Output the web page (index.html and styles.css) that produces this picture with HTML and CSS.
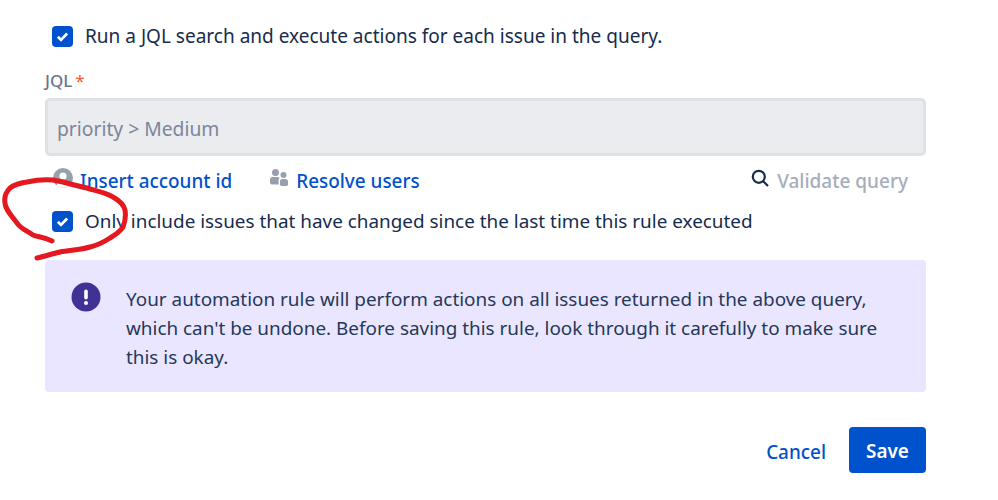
FILE: index.html
```html
<!DOCTYPE html>
<html lang="en">
<head>
    <meta charset="UTF-8">
    <title>JQL rule settings</title>
    <link rel="stylesheet" href="styles.css">
</head>
<body>
    <div class="form">
        <label class="check check-first">
            <span class="box"><svg viewBox="0 0 20 20"><path d="M5.600 10.200l3 3 5.800-6" fill="none" stroke="#fff" stroke-width="2.600"/></svg></span>
            Run a JQL search and execute actions for each issue in the query.
        </label>
        <div class="field-label">JQL<span class="req">*</span></div>
        <div class="jql-input">priority &gt; Medium</div>
        <div class="links">
            <a class="link link-account">
                <svg class="icon" viewBox="0 0 20 20" width="20" height="20"><circle cx="10" cy="10" r="10" fill="#97a0af"/><circle cx="10" cy="8" r="3.600" fill="#fff"/><path d="M3.600 17.500c1-3.600 3.400-5 6.400-5s5.400 1.400 6.400 5a10 10 0 0 1-12.800 0z" fill="#fff"/></svg>
                Insert account id
            </a>
            <a class="link link-users">
                <svg class="icon" viewBox="0 0 20 20" width="20" height="20"><circle cx="6.500" cy="4.500" r="3.500" fill="#97a0af"/><circle cx="14.500" cy="7" r="3" fill="#97a0af"/><path d="M1 11.500c0-1.500 1-2.500 2.500-2.500h5c.8 0 1.500.3 2 .9-.6.700-.9 1.500-.9 2.400v4.200H3c-1.200 0-2-.8-2-2z" fill="#97a0af"/><path d="M11 13c0-1 .8-2 2-2h3.500c1.300 0 2.500 1 2.500 2.200v3c0 1-.8 1.800-1.800 1.800h-4.400c-1 0-1.800-.8-1.800-1.800z" fill="#97a0af"/></svg>
                Resolve users
            </a>
            <span class="validate">
                <svg class="icon" viewBox="0 0 20 20" width="20" height="20"><circle cx="8.800" cy="8.800" r="6" fill="none" stroke="#172b4d" stroke-width="2.200"/><path d="M13.200 13.200l4.800 4.800" stroke="#172b4d" stroke-width="2.200"/></svg>
                Validate query
            </span>
        </div>
        <label class="check check-second">
            <span class="box"><svg viewBox="0 0 20 20"><path d="M5.600 10.200l3 3 5.800-6" fill="none" stroke="#fff" stroke-width="2.600"/></svg></span>
            Only include issues that have changed since the last time this rule executed
        </label>
        <div class="notice">
            <svg class="notice-icon" viewBox="0 0 30 30" width="30" height="30"><circle cx="15" cy="15" r="14.500" fill="#403294"/><rect x="13.200" y="7.500" width="3.600" height="10" rx="1.800" fill="#fff"/><circle cx="15" cy="21" r="2" fill="#fff"/></svg>
            <p>Your automation rule will perform actions on all issues returned in the above query, which can't be undone. Before saving this rule, look through it carefully to make sure this is okay.</p>
        </div>
        <div class="actions">
            <a class="cancel">Cancel</a>
            <button class="save">Save</button>
        </div>
    </div>
    <svg class="scribble" viewBox="0 0 140 90" width="140" height="90"><path d="M52 241C44 237 38 237 33 235C24 229 20 228 17 223C11 215 5 209 5 203C4 197 6 192 10 188C15 184 20 183 27 182C36 180 44 179 53 180C65 182 76 186 87 188C97 191 107 193 113 197C120 201 124 205 125 210C126 216 125 222 123 227C120 232 115 235 110 238C104 242 98 245 90 247C80 250 70 250 60 252C52 254 45 256 37 258" transform="translate(0 -175)" fill="none" stroke="#e5171f" stroke-width="5" stroke-linecap="round" stroke-linejoin="round"/></svg>
</body>
</html>
```
FILE: styles.css
```css
body {
    font-family: "Noto Sans", "Open Sans", sans-serif;
    background-color: #fff;
    color: #172b4d;
    margin: 0;
}

.form {
    width: 881px;
    margin-left: 45px;
    padding-top: 23px;
}

.check {
    display: flex;
    align-items: center;
    gap: 12px;
    padding-left: 7px;
    font-size: 18.9px;
    line-height: 26px;
}

.check-first {
    font-size: 19.03px;
}

.box {
    width: 21px;
    height: 21px;
    background: #0052cc;
    border-radius: 4px;
    flex: none;
    display: block;
}

.box svg {
    display: block;
    width: 100%;
    height: 100%;
}

.field-label {
    margin-top: 21px;
    font-size: 17px;
    line-height: 22px;
    font-weight: 500;
    color: #6b778c;
}

.req {
    color: #ff5630;
    margin-left: 3px;
    font-weight: 400;
}

.jql-input {
    margin-top: 6px;
    height: 50px;
    padding: 2px 9px 0;
    display: flex;
    align-items: center;
    background: #ebecf0;
    border: 3px solid #dfe1e6;
    border-radius: 5px;
    font-size: 19.3px;
    color: #7a869a;
}

.links {
    display: flex;
    align-items: center;
    margin-top: 10px;
    height: 30px;
    font-size: 18.9px;
    font-weight: 500;
}

.link {
    display: flex;
    align-items: center;
    gap: 7px;
    color: #0052cc;
}

.link-account {
    margin-left: 8px;
}

.link-users {
    margin-left: 37px;
}

.icon {
    flex: none;
    margin-bottom: 6px;
}

.validate {
    display: flex;
    align-items: center;
    gap: 7px;
    margin-left: auto;
    margin-right: 18px;
    font-size: 19px;
    color: #a5adba;
}

.check-second {
    margin-top: 12px;
}

.notice {
    display: flex;
    gap: 25px;
    margin-top: 26px;
    height: 132px;
    box-sizing: border-box;
    padding: 25px 26px 0;
    background: #eae6ff;
    border-radius: 4px;
}

.notice-icon {
    flex: none;
    margin-top: -3px;
}

.notice p {
    margin: 0;
    font-size: 18.9px;
    line-height: 29px;
    color: #253858;
}

.actions {
    display: flex;
    justify-content: flex-end;
    align-items: center;
    gap: 23px;
    margin-top: 35px;
}

.cancel {
    padding-top: 3px;
    font-size: 18.9px;
    font-weight: 500;
    color: #0052cc;
}

.save {
    width: 77px;
    height: 46px;
    padding-top: 3px;
    background: #0052cc;
    color: #fff;
    border: 0;
    border-radius: 4px;
    font-family: inherit;
    font-size: 18.9px;
    font-weight: 600;
}

.scribble {
    position: absolute;
    left: 0;
    top: 175px;
}
```
